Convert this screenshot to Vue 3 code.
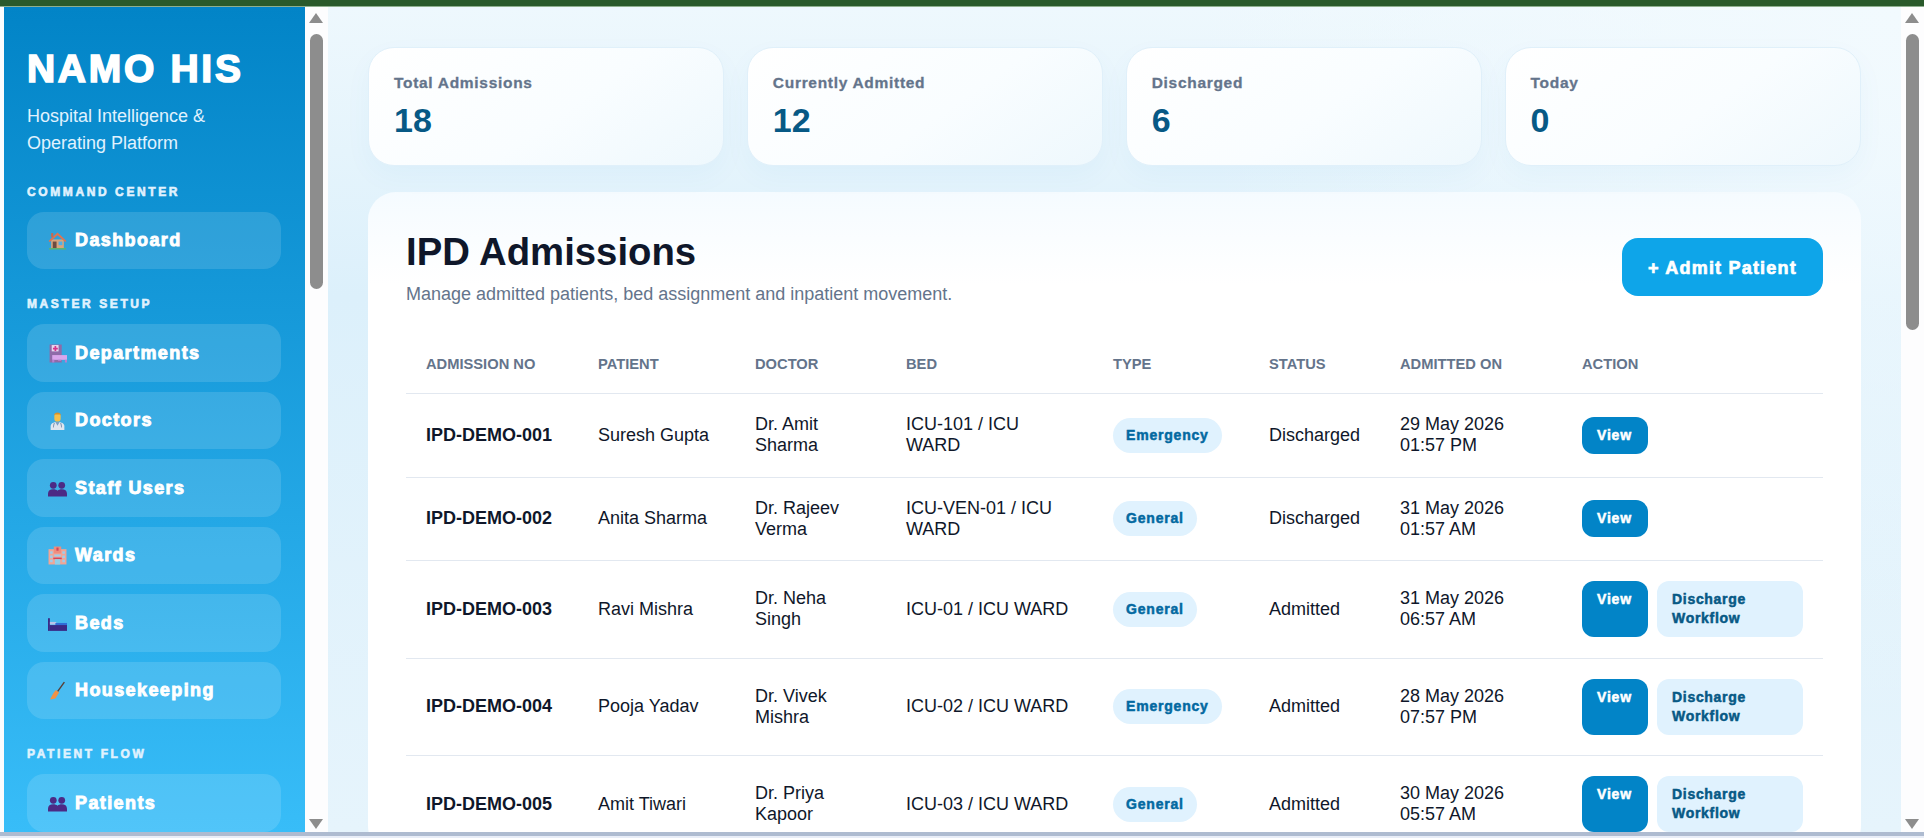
<template>
  <div class="frame">
    <div class="topbar"></div>
    <div class="window">
      <aside class="sidebar">
        <h1 class="brand">NAMO HIS</h1>
        <p class="tagline">Hospital Intelligence &amp; Operating Platform</p>
        <section v-for="group in navGroups" :key="group.title" class="nav-group">
          <div class="nav-title">{{ group.title }}</div>
          <a v-for="item in group.items" :key="item.label" class="nav-item">
            <svg class="nav-icon" viewBox="0 0 18 18">
              <template v-if="item.icon === 'house'">
                <rect x="3" y="8" width="12" height="8.5" fill="#d9a57c" />
                <rect x="4.5" y="10" width="3.6" height="6.5" fill="#6d4c41" />
                <rect x="10" y="10" width="3.6" height="3.4" fill="#4fb0e8" />
                <path d="M0.5 9.5 9 1.5l8.5 8-1.2 1L9 4 1.7 10.5z" fill="#e2734f" />
                <rect x="3" y="2" width="2" height="4" fill="#c8694c" />
                <rect x="1" y="16.2" width="16" height="1.3" fill="#5fb56a" />
              </template>
              <template v-else-if="item.icon === 'dept'">
                <rect x="1.5" y="0.5" width="11.5" height="17" fill="#8e6ba8" />
                <rect x="3.5" y="1" width="6.500" height="6" fill="#e8d7ee" />
                <path d="M6.2 2h1.6v1.500H9.300v1.600H7.800v1.500H6.200V5.100H4.700V3.500h1.500z" fill="#d6348c" />
                <rect x="4" y="10.500" width="14" height="4.500" fill="#d9a6ec" />
                <rect x="4" y="15" width="2" height="2.500" fill="#b57fd0" />
                <rect x="16" y="15" width="2" height="2.500" fill="#b57fd0" />
                <rect x="9.500" y="15" width="3" height="1" fill="#b57fd0" />
              </template>
              <template v-else-if="item.icon === 'doctor'">
                <path d="M2.500 18v-3.500c0-2.500 2.500-4 6.500-4s6.500 1.500 6.500 4V18z" fill="#dfe6ef" />
                <path d="M7 10.500 9 14l2-3.500z" fill="#7aa0c8" />
                <path d="M6 11.500c-.8 2-.8 3-.8 4M12 11.500c.8 2 .8 3 .8 4" stroke="#55749a" stroke-width=".8" fill="none" />
                <rect x="6" y="2" width="6" height="8" rx="3" fill="#f5c04a" />
                <path d="M5.800 4C6 .5 12 .5 12.200 4L11 3.200H7z" fill="#d6902a" />
              </template>
              <template v-else-if="item.icon === 'people'">
                <circle cx="5" cy="6" r="3.200" fill="#4c2a85" />
                <circle cx="13" cy="6" r="3.200" fill="#4c2a85" />
                <path d="M0 16.500v-2.500c0-2.800 2-4.200 5-4.200 1.700 0 3 .5 4 1.400 1-.9 2.300-1.400 4-1.400 3 0 5 1.400 5 4.200v2.500z" fill="#4c2a85" />
              </template>
              <template v-else-if="item.icon === 'hospital'">
                <rect x="0.500" y="3" width="17" height="14.500" fill="#f0a596" />
                <rect x="5.500" y="0.500" width="7" height="6.500" fill="#ef8d7d" />
                <rect x="8" y="1.500" width="2" height="3" fill="#d6455a" />
                <g fill="#9fcdea">
                  <rect x="2" y="5" width="2.400" height="2.400" />
                  <rect x="2" y="9" width="2.400" height="2.400" />
                  <rect x="2" y="13" width="2.400" height="2.400" />
                  <rect x="13.600" y="5" width="2.400" height="2.400" />
                  <rect x="13.600" y="9" width="2.400" height="2.400" />
                  <rect x="13.600" y="13" width="2.400" height="2.400" />
                  <rect x="6" y="8" width="6" height="2" />
                </g>
                <rect x="5" y="11" width="8" height="1.500" fill="#d6455a" />
                <rect x="6.500" y="12.500" width="5" height="5" fill="#8fd0ea" />
              </template>
              <template v-else-if="item.icon === 'bed'">
                <rect x="0" y="4" width="1.800" height="12" fill="#3a2a86" />
                <rect x="1.800" y="7.500" width="6" height="2.500" fill="#b8c4ea" />
                <rect x="7" y="8.500" width="11" height="4" fill="#2f6ed8" />
                <rect x="1.800" y="10.500" width="16.200" height="5.500" fill="#3a2a86" />
              </template>
              <template v-else>
                <path d="M15.500 1 9 10" stroke="#5a3d33" stroke-width="1.300" />
                <path d="M7.500 8.500 10.500 11 7 16.500 2 17.500c1-2 2.500-6 5.500-9z" fill="#ef9247" />
              </template>
            </svg>
            <span>{{ item.label }}</span>
          </a>
        </section>
      </aside>
      <div class="scrollbar">
        <i class="arrow up"></i>
        <i class="thumb side-thumb"></i>
        <i class="arrow down"></i>
      </div>
      <main class="content">
        <div class="stats">
          <div v-for="stat in stats" :key="stat.label" class="stat">
            <div class="stat-label">{{ stat.label }}</div>
            <div class="stat-value">{{ stat.value }}</div>
          </div>
        </div>
        <div class="panel">
          <div class="panel-head">
            <div>
              <h2>IPD Admissions</h2>
              <p>Manage admitted patients, bed assignment and inpatient movement.</p>
            </div>
            <button class="admit">+ Admit Patient</button>
          </div>
          <table>
            <colgroup>
              <col v-for="w in colWidths" :key="w" :width="w" />
            </colgroup>
            <thead>
              <tr>
                <th v-for="h in headers" :key="h">{{ h }}</th>
              </tr>
            </thead>
            <tbody>
              <tr v-for="row in admissions" :key="row.no">
                <td class="no">{{ row.no }}</td>
                <td>{{ row.patient }}</td>
                <td>{{ row.doctor }}</td>
                <td>{{ row.bed }}</td>
                <td><span class="pill">{{ row.type }}</span></td>
                <td>{{ row.status }}</td>
                <td>{{ row.date }}<br />{{ row.time }}</td>
                <td>
                  <div class="actions">
                    <button class="btn-view"><span>View</span></button>
                    <button v-if="row.status === 'Admitted'" class="btn-discharge"><span>Discharge Workflow</span></button>
                  </div>
                </td>
              </tr>
            </tbody>
          </table>
        </div>
      </main>
      <div class="scrollbar">
        <i class="arrow up"></i>
        <i class="thumb main-thumb"></i>
        <i class="arrow down"></i>
      </div>
    </div>
    <div class="bottomline"></div>
  </div>
</template>

<script setup>
const navGroups = [
  { title: 'COMMAND CENTER', items: [{ label: 'Dashboard', icon: 'house' }] },
  {
    title: 'MASTER SETUP',
    items: [
      { label: 'Departments', icon: 'dept' },
      { label: 'Doctors', icon: 'doctor' },
      { label: 'Staff Users', icon: 'people' },
      { label: 'Wards', icon: 'hospital' },
      { label: 'Beds', icon: 'bed' },
      { label: 'Housekeeping', icon: 'broom' }
    ]
  },
  { title: 'PATIENT FLOW', items: [{ label: 'Patients', icon: 'people' }] }
]

const stats = [
  { label: 'Total Admissions', value: 18 },
  { label: 'Currently Admitted', value: 12 },
  { label: 'Discharged', value: 6 },
  { label: 'Today', value: 0 }
]

const headers = ['ADMISSION NO', 'PATIENT', 'DOCTOR', 'BED', 'TYPE', 'STATUS', 'ADMITTED ON', 'ACTION']
const colWidths = [172, 157, 151, 207, 156, 131, 182, 261]

const admissions = [
  { no: 'IPD-DEMO-001', patient: 'Suresh Gupta', doctor: 'Dr. Amit Sharma', bed: 'ICU-101 / ICU WARD', type: 'Emergency', status: 'Discharged', date: '29 May 2026', time: '01:57 PM' },
  { no: 'IPD-DEMO-002', patient: 'Anita Sharma', doctor: 'Dr. Rajeev Verma', bed: 'ICU-VEN-01 / ICU WARD', type: 'General', status: 'Discharged', date: '31 May 2026', time: '01:57 AM' },
  { no: 'IPD-DEMO-003', patient: 'Ravi Mishra', doctor: 'Dr. Neha Singh', bed: 'ICU-01 / ICU WARD', type: 'General', status: 'Admitted', date: '31 May 2026', time: '06:57 AM' },
  { no: 'IPD-DEMO-004', patient: 'Pooja Yadav', doctor: 'Dr. Vivek Mishra', bed: 'ICU-02 / ICU WARD', type: 'Emergency', status: 'Admitted', date: '28 May 2026', time: '07:57 PM' },
  { no: 'IPD-DEMO-005', patient: 'Amit Tiwari', doctor: 'Dr. Priya Kapoor', bed: 'ICU-03 / ICU WARD', type: 'General', status: 'Admitted', date: '30 May 2026', time: '05:57 AM' }
]
</script>

<style>
html,
body {
  margin: 0;
  overflow: hidden;
}
</style>

<style scoped>
.frame {
  width: 1924px;
  height: 838px;
  display: flex;
  flex-direction: column;
  background: #fbfcfe;
  font-family: "Liberation Sans", Arial, sans-serif;
  overflow: hidden;
}

.topbar {
  height: 6px;
  flex: none;
  background: #2a5a2b;
  border-bottom: 1px solid #8fb08f;
}

.window {
  flex: 1;
  min-height: 0;
  display: flex;
  padding-left: 4px;
}

.sidebar {
  width: 301px;
  flex: none;
  box-sizing: border-box;
  padding: 40px 24px 0 23px;
  background: linear-gradient(180deg, #0284c7 0%, #38bdf8 100%);
  color: #fff;
  overflow: hidden;
}

.brand {
  margin: 0;
  font-size: 39px;
  line-height: 44px;
  font-weight: 700;
  letter-spacing: 2.700px;
  -webkit-text-stroke: 1.600px #fff;
}

.tagline {
  margin: 12px 0 0;
  font-size: 18px;
  line-height: 27px;
  color: #e0f2fe;
}

.nav-group {
  margin-top: 28px;
}

.nav-group:first-of-type {
  margin-top: 27.500px;
}

.nav-title {
  height: 14px;
  line-height: 14px;
  margin-bottom: 13px;
  font-size: 12px;
  font-weight: 700;
  letter-spacing: 2.600px;
  color: #e0f2fe;
  -webkit-text-stroke: 0.6px #e0f2fe;
}

.nav-item {
  display: flex;
  align-items: center;
  gap: 8.500px;
  height: 57.500px;
  box-sizing: border-box;
  padding-top: 1px;
  margin-bottom: 10px;
  padding-left: 20.500px;
  border-radius: 17px;
  background: rgba(255, 255, 255, 0.13);
  font-size: 18px;
  font-weight: 700;
  letter-spacing: 1.400px;
  -webkit-text-stroke: 0.9px #fff;
}

.nav-group:last-child .nav-item {
  margin-bottom: 0;
}

.nav-icon {
  width: 19px;
  height: 19px;
  flex: none;
  stroke-width: 0;
}

.scrollbar {
  width: 23px;
  flex: none;
  position: relative;
  background: #fdfdfe;
}

.thumb {
  position: absolute;
  left: 5px;
  width: 13px;
  border-radius: 7px;
  background: #8d8d8d;
}

.side-thumb {
  top: 27px;
  height: 255px;
}

.main-thumb {
  top: 27px;
  height: 296px;
}

.arrow {
  position: absolute;
  left: 4px;
  width: 0;
  height: 0;
  border-left: 7.500px solid transparent;
  border-right: 7.500px solid transparent;
}

.arrow.up {
  top: 6px;
  border-bottom: 10px solid #8d8d8d;
}

.arrow.down {
  bottom: 3px;
  border-top: 10px solid #8d8d8d;
}

.content {
  flex: 1;
  min-width: 0;
  box-sizing: border-box;
  padding: 40px 40px 0;
  overflow: hidden;
  background:
    radial-gradient(circle at 100% 0%, #f2fafe 0%, rgba(242, 250, 254, 0) 40%),
    linear-gradient(180deg, #eef8fd 0%, #dcf0fb 35%, #e6f4fc 100%);
}

.stats {
  display: grid;
  grid-template-columns: repeat(4, 1fr);
  gap: 22.400px;
}

.stat {
  height: 119px;
  box-sizing: border-box;
  padding: 25px 25px 0;
  border: 1px solid #e0f0fa;
  border-radius: 26px;
  background: linear-gradient(145deg, #ffffff 0%, #f9fdff 55%, #eef8fd 100%);
  box-shadow: 0 10px 28px rgba(2, 132, 199, 0.04);
}

.stat-label {
  font-size: 15.500px;
  line-height: 20px;
  font-weight: 700;
  letter-spacing: 0.700px;
  color: #64748b;
  -webkit-text-stroke: 0.3px #64748b;
}

.stat-value {
  margin-top: 7px;
  font-size: 34px;
  line-height: 40px;
  font-weight: 700;
  color: #075985;
}

.panel {
  margin-top: 26px;
  padding: 38px 38px 0;
  border-radius: 28px;
  background: linear-gradient(180deg, #f5fbff 0%, #ffffff 14%);
}

.panel-head {
  display: flex;
  justify-content: space-between;
  align-items: flex-start;
  margin-bottom: 38px;
}

.panel-head h2 {
  margin: 0;
  font-size: 38.300px;
  line-height: 44px;
  font-weight: 700;
  color: #0f172a;
}

.panel-head p {
  margin: 8px 0 0;
  font-size: 18px;
  line-height: 24px;
  color: #64748b;
}

.admit {
  width: 201px;
  height: 58px;
  margin-top: 8px;
  padding: 2px 0 0;
  border: 0;
  border-radius: 16px;
  background: #0ea5e9;
  color: #fff;
  font-family: inherit;
  font-size: 18px;
  font-weight: 700;
  letter-spacing: 1.200px;
  -webkit-text-stroke: 0.7px #fff;
}

table {
  width: 1417px;
  table-layout: fixed;
  border-collapse: collapse;
}

th {
  height: 40px;
  padding: 0 20px 9px;
  text-align: left;
  font-size: 14.700px;
  font-weight: 700;
  color: #64748b;
  border-bottom: 1px solid #e2e8f0;
}

td {
  padding: 20.250px 20px;
  font-size: 18px;
  line-height: 21px;
  color: #0f172a;
  border-bottom: 1px solid #e2e8f0;
}

td.no {
  font-weight: 700;
}

.pill {
  display: inline-block;
  padding: 8px 13px;
  border-radius: 999px;
  background: #e0f2fe;
  color: #0369a1;
  font-size: 14px;
  line-height: 19px;
  font-weight: 700;
  letter-spacing: 0.800px;
  -webkit-text-stroke: 0.5px #0369a1;
}

.actions {
  display: flex;
  gap: 9px;
}

.actions button {
  display: flex;
  align-items: flex-start;
  border: 0;
  border-radius: 12px;
  padding: 9px 15px;
  font-family: inherit;
  font-size: 14px;
  line-height: 19px;
  font-weight: 700;
  text-align: left;
}

.btn-view {
  width: 66px;
  flex: none;
  background: #0284c7;
  color: #fff;
  letter-spacing: 0.800px;
  -webkit-text-stroke: 0.5px #fff;
}

.btn-discharge {
  width: 146px;
  background: #e0f2fe;
  color: #075985;
  letter-spacing: 0.700px;
  -webkit-text-stroke: 0.5px #075985;
}

.bottomline {
  height: 4px;
  flex: none;
  background: #aebbd0;
  border-bottom: 2px solid #e8edf7;
}
</style>
